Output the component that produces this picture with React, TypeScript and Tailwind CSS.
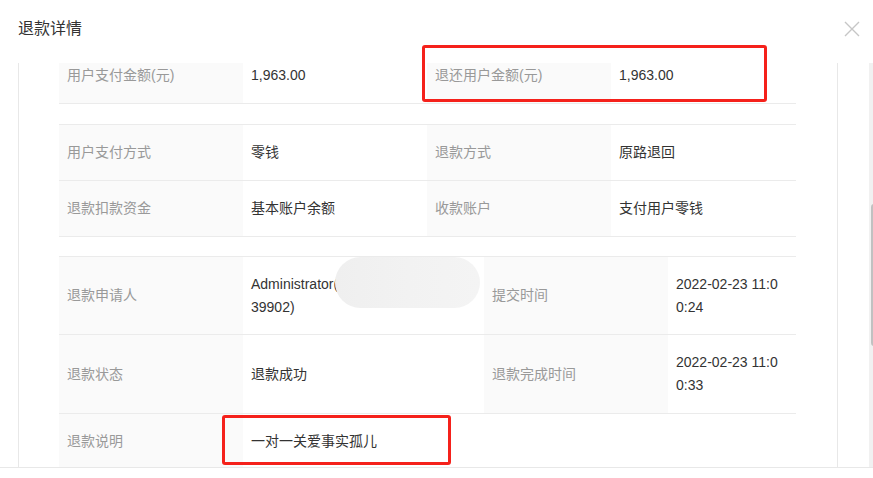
import type { ReactNode } from "react";

type Cell = { label: string; value: ReactNode; span?: boolean };

const labelCls = "flex items-center px-2 bg-[#fafafa] text-[#999999]";
const valueCls = "relative flex items-center px-2 text-[#333333]";

function InfoTable({
  cols,
  rows,
  className = "",
}: {
  cols: string;
  rows: { h: string; cells: Cell[] }[];
  className?: string;
}) {
  return (
    <div className={`w-[737px] border-t border-[#ebebeb] ${className}`}>
      {rows.map((row, i) => (
        <div key={i} className={`grid ${cols} ${row.h} border-b border-[#ebebeb]`}>
          {row.cells.map((c, j) => [
            <div key={`l${j}`} className={labelCls}>
              {c.label}
            </div>,
            <div key={`v${j}`} className={`${valueCls} ${c.span ? "col-span-3" : ""}`}>
              {c.value}
            </div>,
          ])}
        </div>
      ))}
    </div>
  );
}

function TwoLines({ a, b }: { a: string; b: string }) {
  return (
    <div className="leading-[23px]">
      <div>{a}</div>
      <div>{b}</div>
    </div>
  );
}

export default function App() {
  const fourCols = "grid-cols-[184px_184px_184px_185px]";
  const wideCols = "grid-cols-[184px_241px_184px_128px]";

  return (
    <div className="relative w-[873px] h-[478px] overflow-hidden bg-white text-[14px] font-['Liberation_Sans','Noto_Sans_CJK_SC',sans-serif]">
      {/* header */}
      <div className="h-[63px] flex items-start justify-between pl-[18px] pr-[13px] pt-[20px]">
        <h2 className="text-[16px] leading-[18px] text-[#333333]">退款详情</h2>
        <svg width="16" height="16" viewBox="0 0 16 16" className="mt-[1px]">
          <path d="M1 1 L15 15 M15 1 L1 15" stroke="#c6c6c6" strokeWidth="1.4" fill="none" />
        </svg>
      </div>

      {/* body */}
      <div className="flex h-[404px]">
        <div className="w-[18px] shrink-0" />
        <div className="w-[820px] shrink-0 border-x border-[#e8e8e8] overflow-hidden pl-[40px]">
          <div className="-mt-[15px] w-[737px]">
            <div className={`grid ${fourCols} h-[56px] border-b border-[#ebebeb]`}>
              <div className={labelCls}>用户支付金额(元)</div>
              <div className={valueCls}>1,963.00</div>
              <div className={labelCls}>退还用户金额(元)</div>
              <div className={valueCls}>1,963.00</div>
            </div>
          </div>

          <InfoTable
            className="mt-[20px]"
            cols={fourCols}
            rows={[
              {
                h: "h-[56px]",
                cells: [
                  { label: "用户支付方式", value: "零钱" },
                  { label: "退款方式", value: "原路退回" },
                ],
              },
              {
                h: "h-[56px]",
                cells: [
                  { label: "退款扣款资金", value: "基本账户余额" },
                  { label: "收款账户", value: "支付用户零钱" },
                ],
              },
            ]}
          />

          <InfoTable
            className="mt-[19px]"
            cols={wideCols}
            rows={[
              {
                h: "h-[78px]",
                cells: [
                  {
                    label: "退款申请人",
                    value: (
                      <>
                        <TwoLines a="Administrator(" b="39902)" />
                        <div className="absolute left-[92px] top-0 w-[145px] h-[51px] rounded-full bg-gradient-to-r from-[#efefef] via-[#f2f2f2] to-[#f4f4f4]" />
                      </>
                    ),
                  },
                  { label: "提交时间", value: <TwoLines a="2022-02-23 11:0" b="0:24" /> },
                ],
              },
              {
                h: "h-[79px]",
                cells: [
                  { label: "退款状态", value: "退款成功" },
                  { label: "退款完成时间", value: <TwoLines a="2022-02-23 11:0" b="0:33" /> },
                ],
              },
              {
                h: "h-[56px]",
                cells: [{ label: "退款说明", value: "一对一关爱事实孤儿", span: true }],
              },
            ]}
          />
        </div>
        <div className="w-[31px] shrink-0" />
        <div className="w-[8px] shrink-0 bg-[#f1f1f1] pt-[141px]">
          <div className="ml-[2px] w-[6px] h-[142px] bg-[#c1c1c1] rounded-[3px]" />
        </div>
      </div>

      {/* footer */}
      <div className="h-[11px] border-t border-[#e8e8e8]" />

      {/* annotations */}
      <div className="absolute left-[422px] top-[45px] w-[345px] h-[57px] border-[3px] border-[#f5211b] rounded-[3px]" />
      <div className="absolute left-[222px] top-[415px] w-[229px] h-[50px] border-[3px] border-[#f5211b] rounded-[3px]" />
    </div>
  );
}
